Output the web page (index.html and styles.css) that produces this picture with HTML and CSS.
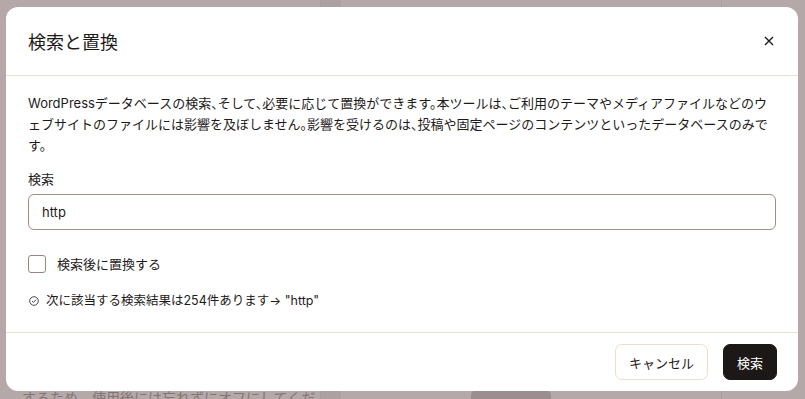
FILE: index.html
```html
<!DOCTYPE html>
<html lang="ja">
<head>
  <meta charset="UTF-8">
  <meta name="viewport" content="width=device-width, initial-scale=1.0">
  <title>検索と置換</title>
  <link rel="stylesheet" href="styles.css">
</head>
<body>
  <!-- page behind the dialog (dimmed) -->
  <div class="backdrop">
    <div class="page-col left-col">
      <p class="page-text bottom-line">するため、使用後には忘れずにオフにしてくだ</p>
    </div>
    <div class="page-col mid-col">
      <span class="page-btn"></span>
    </div>
    <div class="page-col right-col">
      <p class="page-text side-text">変<br>直</p>
      <p class="page-text side-text mid">前</p>
      <p class="page-text side-text low">H<br>リ<br>高<br>レクトはSE</p>
    </div>
  </div>

  <div class="modal">
    <div class="modal-header">
      <h2>検索と置換</h2>
      <button class="close-btn" aria-label="閉じる">
        <svg width="10" height="10" viewBox="0 0 10 10"><path d="M1 1L9 9M9 1L1 9" stroke="#1e1a1a" stroke-width="1.4" fill="none"/></svg>
      </button>
    </div>

    <div class="modal-body">
      <p class="intro">WordPressデータベースの検索、そして、必要に応じて置換ができます。本ツールは、ご利用のテーマやメディアファイルなどのウェブサイトのファイルには影響を及ぼしません。影響を受けるのは、投稿や固定ページのコンテンツといったデータベースのみです。</p>

      <div class="form-group">
        <label for="search">検索</label>
        <input type="text" id="search" value="http">
      </div>

      <label class="check-row">
        <span class="checkbox"></span>
        検索後に置換する
      </label>

      <p class="result">
        <svg width="10" height="10" viewBox="0 0 10 10"><circle cx="5" cy="5" r="4.3" stroke="#3a3434" stroke-width="0.9" fill="none"/><path d="M3 5.1L4.4 6.4L7 3.7" stroke="#3a3434" stroke-width="0.9" fill="none"/></svg>
        次に該当する検索結果は254件あります→ "http"
      </p>
    </div>

    <div class="modal-footer">
      <button class="btn btn-cancel">キャンセル</button>
      <button class="btn btn-primary">検索</button>
    </div>
  </div>
</body>
</html>
```

FILE: styles.css
```css
/* Global Styles */
body {
  margin: 0;
  padding: 0;
  width: 805px;
  height: 399px;
  overflow: hidden;
  background-color: #b5a8a8;
  font-family: 'Inter', 'Noto Sans CJK JP', sans-serif;
  color: #1e1a1a;
}

/* Dimmed page behind */
.backdrop {
  display: flex;
  height: 399px;
}

.page-col {
  position: relative;
  height: 100%;
}

.left-col {
  width: 320px;
  border-right: 1px solid #a99c9c;
}

.mid-col {
  width: 380px;
  border-left: 20px solid #ada0a0;
}

.right-col {
  flex: 1;
  border-left: 1px solid #a99c9c;
}

.page-text {
  margin: 0;
  color: #837575;
  font-size: 14px;
}

.bottom-line {
  position: absolute;
  left: 22px;
  top: 387px;
  white-space: nowrap;
}

.page-btn {
  position: absolute;
  left: 130px;
  top: 391px;
  width: 80px;
  height: 12px;
  border-radius: 4px;
  background-color: #9c8e8e;
}

.side-text {
  position: absolute;
  left: 98px;
  top: 6px;
  font-size: 13px;
  line-height: 18px;
  white-space: nowrap;
}

.side-text.mid {
  top: 90px;
}

.side-text.low {
  top: 335px;
}

/* Dialog */
.modal {
  position: absolute;
  top: 7px;
  left: 6px;
  width: 792px;
  height: 384px;
  background-color: #ffffff;
  border-radius: 12px;
  display: flex;
  flex-direction: column;
}

.modal-header {
  height: 68px;
  padding: 0 22px;
  display: flex;
  align-items: center;
  justify-content: space-between;
  border-bottom: 1px solid #eeddcc;
}

.modal-header h2 {
  margin: 0;
  font-size: 18px;
  font-weight: 400;
  color: #1e1a1a;
}

.close-btn {
  background: none;
  border: none;
  padding: 4px;
  margin-right: -2px;
  cursor: pointer;
  display: flex;
}

.modal-body {
  flex: 1;
  padding: 17px 22px 0;
  border-bottom: 1px solid #eeddcc;
}

.intro {
  margin: 0;
  font-size: 13px;
  line-height: 21px;
  font-feature-settings: "halt";
  color: #1e1a1a;
}

.form-group {
  margin-top: 14px;
}

.form-group label {
  display: block;
  font-size: 13px;
  line-height: 18px;
  margin-bottom: 6px;
}

.form-group input {
  width: 100%;
  height: 36px;
  box-sizing: border-box;
  padding: 0 13px;
  border: 1px solid #a38e86;
  border-radius: 6px;
  font-family: inherit;
  font-size: 13px;
  color: #1e1a1a;
  outline: none;
}

.check-row {
  display: flex;
  align-items: center;
  gap: 11px;
  margin-top: 25px;
  font-size: 13px;
  line-height: 18px;
}

.checkbox {
  width: 16px;
  height: 16px;
  border: 1px solid #9c847d;
  border-radius: 3px;
}

.result {
  display: flex;
  align-items: center;
  gap: 7px;
  margin: 19px 0 0 1px;
  font-size: 12.5px;
  line-height: 18px;
}

.modal-footer {
  height: 58px;
  padding: 0 21px;
  display: flex;
  align-items: center;
  justify-content: flex-end;
  gap: 15px;
}

.btn {
  height: 36px;
  padding: 0 13px;
  border-radius: 7px;
  font-family: inherit;
  font-size: 13px;
  cursor: pointer;
}

.btn-cancel {
  background-color: #ffffff;
  border: 1px solid #eeddcc;
  color: #1e1a1a;
}

.btn-primary {
  background-color: #1c1818;
  border: 1px solid #1c1818;
  color: #ffffff;
}
```
